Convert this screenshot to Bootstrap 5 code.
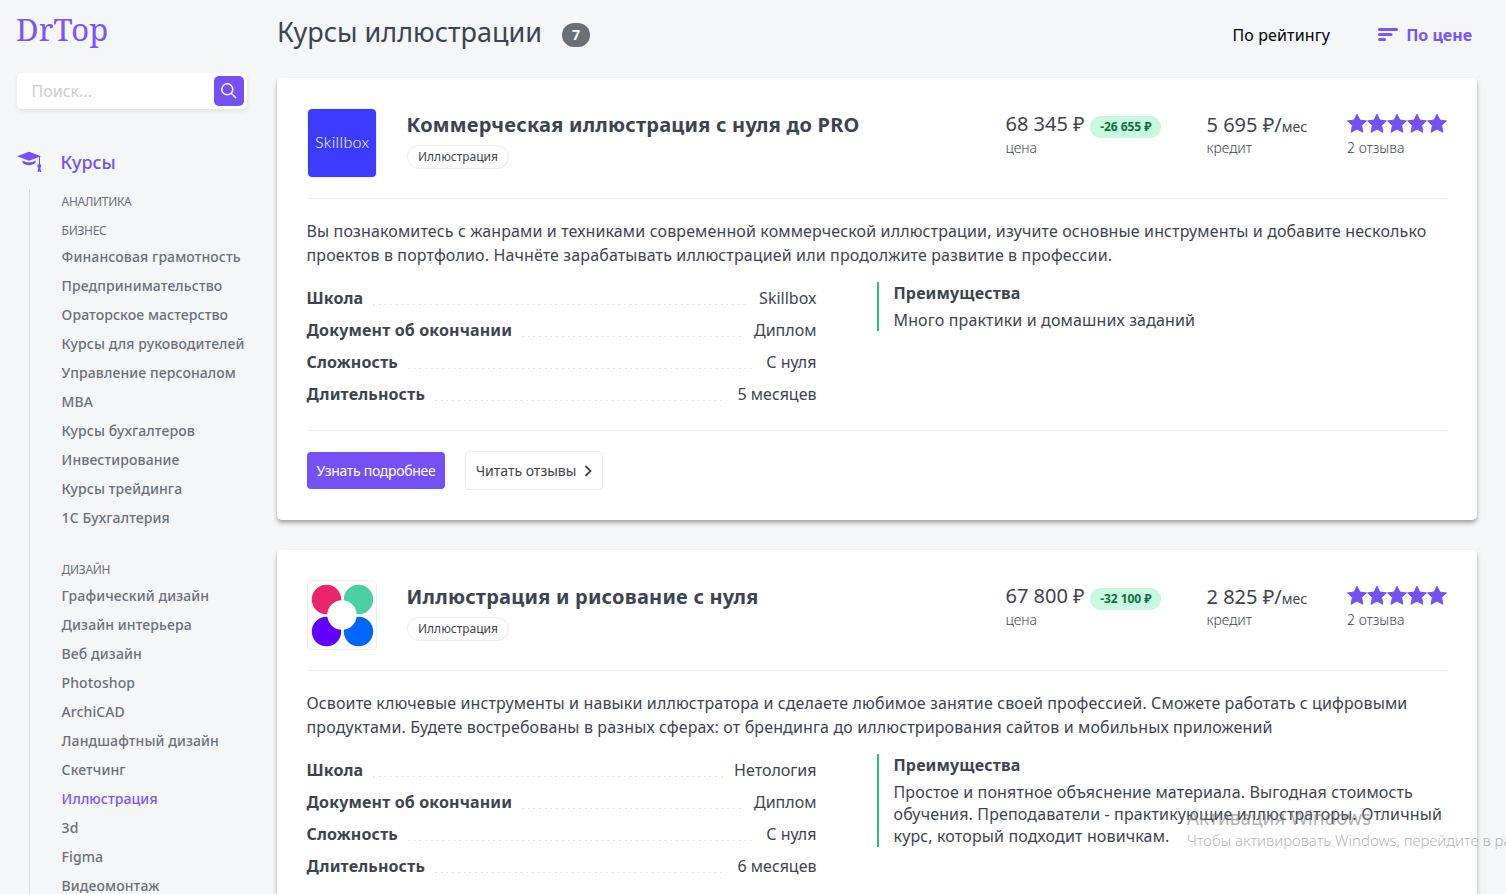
<!DOCTYPE html>
<html lang="ru">
<head>
<meta charset="utf-8">
<meta name="viewport" content="width=device-width, initial-scale=1">
<title>Курсы иллюстрации — DrTop</title>
<link href="https://cdn.jsdelivr.net/npm/bootstrap@5.3.0/dist/css/bootstrap.min.css" rel="stylesheet">
<style>
:root { --brand: #7551f5; --ink: #3e444f; --line: #ebebec; }
body { background: #f4f6f8; color: var(--ink); font-family: "Noto Sans", sans-serif; font-size: 16px; line-height: 24px; height: 894px; overflow: hidden; }
a { text-decoration: none; color: inherit; }
.page { padding-left: 17px; gap: 30px; height: 894px; overflow: hidden; }
.side { width: 230px; }
.brand { font-family: "Noto Serif", "DejaVu Serif Condensed", "DejaVu Serif", serif; font-stretch: condensed; font-size: 31px; letter-spacing: .2px; line-height: 40px; color: #7c53ff; height: 40px; margin: 9px 0 24px -1px; }
.search { height: 36px; border-radius: 5px; padding: 3px; box-shadow: 0 2px 4px rgba(0,0,0,.08); }
.search input { min-width: 0; font-size: 16px; padding: 0 0 0 11.5px; color: var(--ink); }
.search input::placeholder { color: #cdcdcd; opacity: 1; }
.search input:focus { box-shadow: none; }
.search .btn { width: 30px; height: 30px; background: var(--brand); border-radius: 5px; }
.side-title { margin-top: 39px; height: 28px; font-size: 18px; color: var(--brand); gap: 18.5px; font-weight: 500; }
.tree { margin: 13px 0 0 12px; border-left: 1px solid #dadde0; padding-left: 31.6px; height: 760px; font-size: 14px; line-height: 29px; white-space: nowrap; color: #6c7078; letter-spacing: .1px; }
.tree h6 { font-size: 12px; line-height: 25px; margin: 0; font-weight: 400; text-transform: uppercase; letter-spacing: -.3px; }
.tree ul { margin: -1px 0 25px; font-weight: 500; }
.tree .current { color: #7c53ff; }
.content { width: 1200px; }
.top-row { height: 78px; }
.top-row h1 { font-size: 27px; line-height: 40px; margin: 12px 20px 0 0; font-weight: 400; width: 265px; white-space: nowrap; }
.count { background: #6b7077; color: #fff; font-size: 14px; font-weight: 700; width: 28px; height: 24px; margin-top: 23px; }
.sorting { margin: 23px 5px 0 auto; gap: 48px; color: #000; }
.sorting .by-rating { letter-spacing: .13px; }
.sorting .chosen { color: #7c53ff; font-weight: 700; gap: 8px; }
.course { border: 0; border-radius: 5px; padding: 30px; height: 442px; margin-bottom: 30px; color: var(--ink); box-shadow: 0 3px 4px rgba(0,0,0,.33); }
.school-logo { width: 70px; height: 70px; border: 1px solid #f0f0f0; border-radius: 5px; overflow: hidden; margin-right: 30px; }
.school-logo svg { display: block; }
.course h2 { font-size: 20px; line-height: 28px; font-weight: 700; margin: 3px 0 4px -.5px; letter-spacing: .22px; }
.topic { border: 1px solid var(--line); border-radius: 12px; height: 24px; line-height: 22px; font-size: 12px; padding: 0 10px; display: inline-block; }
.price-col { width: 201px; } .credit-col { width: 140.5px; } .rate-col { width: 100px; }
.sum { font-size: 20px; line-height: 28px; height: 28px; margin-top: 2px; white-space: nowrap; }
.credit-col .sum { margin-top: 3px; margin-bottom: -1px; }
.sum small { font-size: 14px; }
.note { font-size: 14px; line-height: 20px; font-weight: 300; }
.discount { background: #c8f7e2; color: #08713f; font-size: 12px; font-weight: 700; letter-spacing: -.05px; border-radius: 11px; height: 22px; line-height: 22px; width: 71px; text-align: center; margin: 6px 0 0 5.5px; }
.stars { height: 24px; margin-top: 4px; margin-bottom: 2px; display: block; }
.rule { height: 1px; background: var(--line); margin: 20px 0; }
.about { margin: 0 0 15px -.5px; letter-spacing: .13px; white-space: nowrap; }
.facts { width: 510px; margin-right: 60px; }
.facts .fact { height: 32px; line-height: 32px; margin-left: -.5px; margin-right: .5px; }
.facts strong { letter-spacing: .15px; }
.dots { height: 1px; margin: 22px 10px 0; background: repeating-linear-gradient(90deg, #e6e6e7 0 2px, transparent 2px 5.7px); }
.pros { border-left: 2px solid #2bbd80; padding-left: 14.5px; line-height: 22px; width: 570px; letter-spacing: .14px; white-space: nowrap; }
.pros h3 { font-size: 16px; line-height: 22px; font-weight: 700; margin: 0 0 5px; }
.btn-more, .btn-reviews { font-size: 14px; line-height: 20px; border-radius: 4px; white-space: nowrap; padding: 0; }
.btn-more { background: var(--brand); color: #fff; width: 138px; height: 37px; line-height: 37px; text-align: center; letter-spacing: -.3px; }
.btn-reviews { border: 1px solid var(--line); width: 138px; height: 39px; gap: 8px; }
.os-notice { left: 1187px; top: 806px; width: 319px; overflow: hidden; color: rgba(125,125,125,.6); white-space: nowrap; font-size: 15px; letter-spacing: -.03px; line-height: 20px; font-weight: 300; }
.os-notice b { font-size: 19px; line-height: 24px; font-weight: 400; display: block; }
</style>
</head>
<body>
<svg width="0" height="0" class="d-none" aria-hidden="true">
  <symbol id="five-stars" viewBox="0 0 100 24">
    <g fill="#7551f5" stroke="#7551f5" stroke-width="1" stroke-linejoin="round">
      <path id="star" d="M10 2.2l2.900 5.900 6.500.8-4.800 4.500 1.300 6.900-5.900-3.200-5.900 3.200 1.300-6.900L.6 8.900l6.500-.8z"/>
      <use href="#star" x="20"/><use href="#star" x="40"/><use href="#star" x="60"/><use href="#star" x="80"/>
    </g>
  </symbol>
</svg>
<div class="page d-flex">
  <aside class="side flex-shrink-0">
    <a href="#" class="brand d-block">DrTop</a>
    <form class="search bg-white d-flex">
      <input class="form-control border-0 bg-transparent" type="text" placeholder="Поиск...">
      <button type="button" class="btn p-0 border-0 flex-shrink-0 d-flex align-items-center justify-content-center" aria-label="Найти">
        <svg width="16" height="16" viewBox="0 0 16 16" fill="none" stroke="#fff" stroke-width="1.5" stroke-linecap="round"><circle cx="6.3" cy="6.3" r="5.5"/><path d="M10.3 10.3l4.300 4.300"/></svg>
      </button>
    </form>
    <div class="side-title d-flex align-items-center">
      <svg width="25" height="22" viewBox="0 0 25 22" fill="#7551f5"><path d="M0 5.2L12 .7l12 4.500L12 9.800z"/><path d="M5.500 9.400c4 2.600 9 2.600 13 0v2.400c-2.500 3.300-10.500 3.300-13 0z"/><path d="M22 5h1v8h-1z"/><circle cx="22.300" cy="15" r="2"/><path d="M20.500 21l1-5h1.500l1.300 5h-1.600l-.5-1.500-.5 1.500z"/></svg>
      <span>Курсы</span>
    </div>
    <nav class="tree">
      <h6 class="mb-1">Аналитика</h6>
      <h6>Бизнес</h6>
      <ul class="list-unstyled">
        <li><a href="#">Финансовая грамотность</a></li>
        <li><a href="#">Предпринимательство</a></li>
        <li><a href="#">Ораторское мастерство</a></li>
        <li><a href="#">Курсы для руководителей</a></li>
        <li><a href="#">Управление персоналом</a></li>
        <li><a href="#">MBA</a></li>
        <li><a href="#">Курсы бухгалтеров</a></li>
        <li><a href="#">Инвестирование</a></li>
        <li><a href="#">Курсы трейдинга</a></li>
        <li><a href="#">1С Бухгалтерия</a></li>
      </ul>
      <h6>Дизайн</h6>
      <ul class="list-unstyled">
        <li><a href="#">Графический дизайн</a></li>
        <li><a href="#">Дизайн интерьера</a></li>
        <li><a href="#">Веб дизайн</a></li>
        <li><a href="#">Photoshop</a></li>
        <li><a href="#">ArchiCAD</a></li>
        <li><a href="#">Ландшафтный дизайн</a></li>
        <li><a href="#">Скетчинг</a></li>
        <li><a href="#" class="current">Иллюстрация</a></li>
        <li><a href="#">3d</a></li>
        <li><a href="#">Figma</a></li>
        <li><a href="#">Видеомонтаж</a></li>
      </ul>
    </nav>
  </aside>

  <main class="content flex-shrink-0">
    <header class="top-row d-flex align-items-start">
      <h1>Курсы иллюстрации</h1>
      <span class="count rounded-pill text-center">7</span>
      <div class="sorting d-flex">
        <a href="#" class="by-rating">По рейтингу</a>
        <a href="#" class="chosen d-flex align-items-center">
          <svg width="20" height="14" viewBox="0 0 20 14" stroke="#7c53ff" stroke-width="3" stroke-linecap="round"><path d="M1.500 1.500h17M1.500 6.500h11.500M1.500 11.500h5"/></svg>
          <span>По цене</span>
        </a>
      </div>
    </header>

    <article class="card course">
      <div class="d-flex">
        <div class="school-logo flex-shrink-0">
          <svg width="68" height="68" viewBox="0 0 68 68"><rect width="68" height="68" rx="3" fill="#3d3bff"/><text x="7" y="39" fill="#fff" font-family="Lato, sans-serif" font-weight="300" font-size="16" textLength="54" lengthAdjust="spacing">Skillbox</text></svg>
        </div>
        <div class="flex-grow-1">
          <h2>Коммерческая иллюстрация с нуля до PRO</h2>
          <a href="#" class="topic">Иллюстрация</a>
        </div>
        <div class="price-col">
          <div class="sum d-flex"><span>68 345 ₽</span><span class="discount">-26 655 ₽</span></div>
          <div class="note">цена</div>
        </div>
        <div class="credit-col">
          <div class="sum">5 695 ₽/<small>мес</small></div>
          <div class="note">кредит</div>
        </div>
        <div class="rate-col">
          <svg class="stars" width="100" height="24"><use href="#five-stars"/></svg>
          <div class="note">2 отзыва</div>
        </div>
      </div>
      <div class="rule"></div>
      <p class="about">Вы познакомитесь с жанрами и техниками современной коммерческой иллюстрации, изучите основные инструменты и добавите несколько<br>проектов в портфолио. Начнёте зарабатывать иллюстрацией или продолжите развитие в профессии.</p>
      <div class="d-flex align-items-start">
        <div class="facts">
          <div class="fact d-flex"><strong>Школа</strong><i class="dots flex-grow-1"></i><span>Skillbox</span></div>
          <div class="fact d-flex"><strong>Документ об окончании</strong><i class="dots flex-grow-1"></i><span>Диплом</span></div>
          <div class="fact d-flex"><strong>Сложность</strong><i class="dots flex-grow-1"></i><span>С нуля</span></div>
          <div class="fact d-flex"><strong>Длительность</strong><i class="dots flex-grow-1"></i><span>5 месяцев</span></div>
        </div>
        <div class="pros">
          <h3>Преимущества</h3>
          <div>Много практики и домашних заданий</div>
        </div>
      </div>
      <div class="rule"></div>
      <div class="d-flex align-items-center">
        <a href="#" class="btn-more me-1">Узнать подробнее</a>
        <a href="#" class="btn-reviews ms-3 d-flex align-items-center justify-content-center"><span>Читать отзывы</span><svg width="8" height="12" viewBox="0 0 8 12" fill="none" stroke="#3e444f" stroke-width="1.8"><path d="M1.500 1L6.500 6l-5 5"/></svg></a>
      </div>
    </article>

    <article class="card course">
      <div class="d-flex">
        <div class="school-logo flex-shrink-0">
          <svg width="68" height="68" viewBox="0 0 68 68"><circle cx="18.500" cy="18.500" r="14.700" fill="#eb256b"/><circle cx="50.500" cy="18.500" r="14.700" fill="#4dd0a1"/><circle cx="18.500" cy="50.500" r="14.700" fill="#6100ff"/><circle cx="50.500" cy="50.500" r="14.700" fill="#0066ff"/><circle cx="34" cy="34" r="14.700" fill="#fff"/></svg>
        </div>
        <div class="flex-grow-1">
          <h2>Иллюстрация и рисование с нуля</h2>
          <a href="#" class="topic">Иллюстрация</a>
        </div>
        <div class="price-col">
          <div class="sum d-flex"><span>67 800 ₽</span><span class="discount">-32 100 ₽</span></div>
          <div class="note">цена</div>
        </div>
        <div class="credit-col">
          <div class="sum">2 825 ₽/<small>мес</small></div>
          <div class="note">кредит</div>
        </div>
        <div class="rate-col">
          <svg class="stars" width="100" height="24"><use href="#five-stars"/></svg>
          <div class="note">2 отзыва</div>
        </div>
      </div>
      <div class="rule"></div>
      <p class="about">Освоите ключевые инструменты и навыки иллюстратора и сделаете любимое занятие своей профессией. Сможете работать с цифровыми<br>продуктами. Будете востребованы в разных сферах: от брендинга до иллюстрирования сайтов и мобильных приложений</p>
      <div class="d-flex align-items-start">
        <div class="facts">
          <div class="fact d-flex"><strong>Школа</strong><i class="dots flex-grow-1"></i><span>Нетология</span></div>
          <div class="fact d-flex"><strong>Документ об окончании</strong><i class="dots flex-grow-1"></i><span>Диплом</span></div>
          <div class="fact d-flex"><strong>Сложность</strong><i class="dots flex-grow-1"></i><span>С нуля</span></div>
          <div class="fact d-flex"><strong>Длительность</strong><i class="dots flex-grow-1"></i><span>6 месяцев</span></div>
        </div>
        <div class="pros">
          <h3>Преимущества</h3>
          <div>Простое и понятное объяснение материала. Выгодная стоимость<br>обучения. Преподаватели - практикующие иллюстраторы. Отличный<br>курс, который подходит новичкам.</div>
        </div>
      </div>
    </article>
  </main>
</div>
<div class="os-notice position-absolute pe-none"><b>Активация Windows</b>Чтобы активировать Windows, перейдите в ра</div>
<script src="https://cdn.jsdelivr.net/npm/bootstrap@5.3.0/dist/js/bootstrap.bundle.min.js"></script>
</body>
</html>
